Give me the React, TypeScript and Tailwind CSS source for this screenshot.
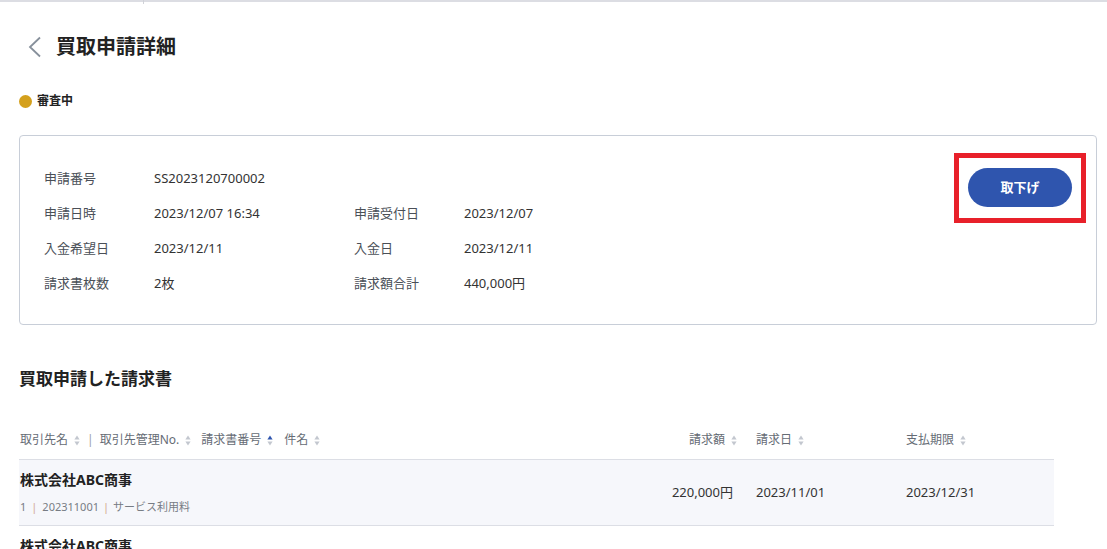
import React from "react";

type InfoRow = [string, string, string?, string?];

const infoRows: InfoRow[] = [
  ["申請番号", "SS2023120700002"],
  ["申請日時", "2023/12/07 16:34", "申請受付日", "2023/12/07"],
  ["入金希望日", "2023/12/11", "入金日", "2023/12/11"],
  ["請求書枚数", "2枚", "請求額合計", "440,000円"],
];

type Invoice = {
  partner: string;
  no: string;
  invoiceNo: string;
  subject: string;
  amount: string;
  issued: string;
  due: string;
};

const invoices: Invoice[] = [
  {
    partner: "株式会社ABC商事",
    no: "1",
    invoiceNo: "202311001",
    subject: "サービス利用料",
    amount: "220,000円",
    issued: "2023/11/01",
    due: "2023/12/31",
  },
  {
    partner: "株式会社ABC商事",
    no: "1",
    invoiceNo: "202311002",
    subject: "サービス利用料",
    amount: "220,000円",
    issued: "2023/11/01",
    due: "2023/12/31",
  },
];

function SortIcon({ active = false }: { active?: boolean }) {
  return (
    <svg width="6" height="11" viewBox="0 0 6 11" className="shrink-0">
      <path d="M3 0.5 L5.6 4.5 H0.4 Z" fill={active ? "#2f55ae" : "#c3c7cf"} />
      <path d="M3 10.5 L5.6 6.5 H0.4 Z" fill="#c3c7cf" />
    </svg>
  );
}

function HeadCell({ label, active }: { label: string; active?: boolean }) {
  return (
    <span className="flex items-center gap-[6px]">
      <span>{label}</span>
      <SortIcon active={active} />
    </span>
  );
}

export default function App() {
  return (
    <div className="min-h-screen bg-white font-['Noto_Sans','Noto_Sans_CJK_JP',sans-serif] text-[#333]">
      <div className="relative h-[2px] bg-[#dcdde3]">
        <span className="absolute left-[143px] top-0 h-[4px] w-px bg-[#d0d2d8]" />
      </div>

      <div className="pl-[19px] pr-[10px]">
        <div className="mt-[33px] flex h-[24px] items-center">
          <svg width="16" height="22" viewBox="0 0 16 22" className="ml-[8px]">
            <path d="M13 1.5 L3 11 L13 20.5" fill="none" stroke="#87909b" strokeWidth="1.8" />
          </svg>
          <h1 className="ml-[13px] text-[20px] font-bold leading-[24px] text-[#222]">買取申請詳細</h1>
        </div>

        <div className="mt-[35px] flex h-[14px] items-center gap-[5px]">
          <span className="h-[13px] w-[13px] rounded-full bg-[#d4a01c]" />
          <span className="text-[12px] font-bold leading-[14px] text-[#222]">審査中</span>
        </div>

        <div className="mt-[27px] flex items-start justify-between rounded-[4px] border border-[#c8ced8] pb-[23px] pl-[24px] pr-[10px] pt-[17px]">
          <div className="mt-[8px] grid grid-cols-[110px_200px_110px_auto] text-[13px] leading-[35px]">
            {infoRows.map((r, i) => (
              <React.Fragment key={i}>
                <span className="text-[#4a4f57]">{r[0]}</span>
                <span>{r[1]}</span>
                <span className="text-[#4a4f57]">{r[2] ?? ""}</span>
                <span>{r[3] ?? ""}</span>
              </React.Fragment>
            ))}
          </div>
          <div className="border-[5px] border-[#e8202a] px-[9px] pb-[11px] pt-[10px]">
            <button
              type="button"
              className="h-[39px] w-[104px] rounded-full bg-[#2f55ae] text-[13px] font-bold text-white"
            >
              取下げ
            </button>
          </div>
        </div>

        <h2 className="mt-[42px] text-[17px] font-bold leading-[24px] text-[#222]">買取申請した請求書</h2>

        <div className="mt-[30px] w-[1035px]">
          <div className="flex h-[39px] items-center border-b border-[#dcdee5] pl-px text-[12px] text-[#666c75]">
            <div className="flex flex-1 items-center">
              <HeadCell label="取引先名" />
              <span className="ml-[7px] mr-[6px] text-[#9aa0a8]">|</span>
              <HeadCell label="取引先管理No." />
              <span className="w-[10px]" />
              <HeadCell label="請求書番号" active />
              <span className="w-[11px]" />
              <HeadCell label="件名" />
            </div>
            <div className="flex w-[120px] justify-end">
              <HeadCell label="請求額" />
            </div>
            <div className="w-[169px] pl-[19px]">
              <HeadCell label="請求日" />
            </div>
            <div className="w-[148px]">
              <HeadCell label="支払期限" />
            </div>
          </div>

          {invoices.map((inv, i) => (
            <div
              key={i}
              className={`flex h-[66px] items-center border-b border-[#dcdee5] pl-px text-[13px] ${
                i === 0 ? "bg-[#f6f7fb]" : "bg-white"
              }`}
            >
              <div className="flex-1">
                <div className="text-[14px] font-bold leading-[20px] text-[#222]">{inv.partner}</div>
                <div className="mt-[9px] text-[11px] leading-[16px] text-[#777c84]">
                  {inv.no}
                  <span className="mx-[5px] text-[#d2a890]">|</span>
                  {inv.invoiceNo}
                  <span className="mx-[4px] text-[#d2a890]">|</span>
                  {inv.subject}
                </div>
              </div>
              <div className="w-[120px] pr-[4px] text-right">{inv.amount}</div>
              <div className="w-[169px] pl-[19px]">{inv.issued}</div>
              <div className="w-[148px]">{inv.due}</div>
            </div>
          ))}
        </div>
      </div>
    </div>
  );
}
